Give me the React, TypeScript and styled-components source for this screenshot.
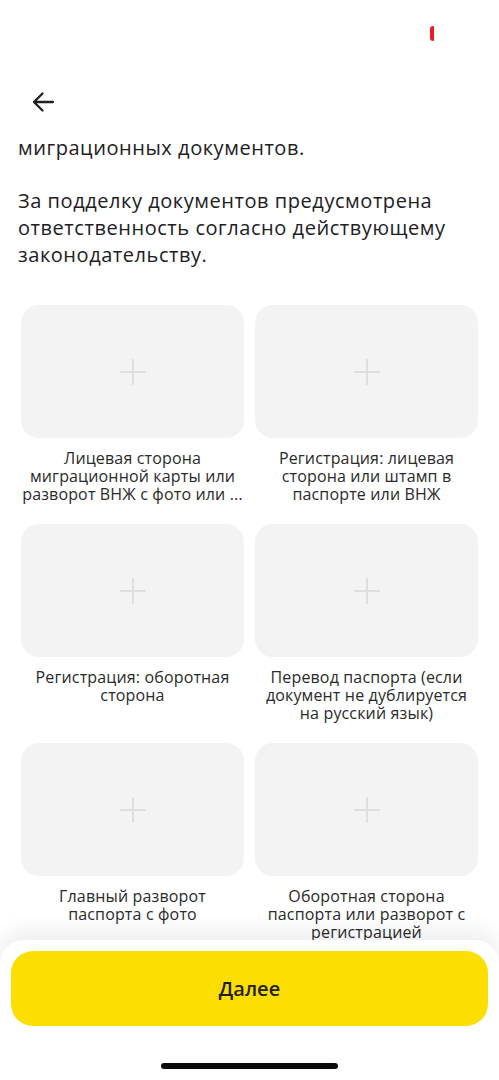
import React from "react";
import styled, { createGlobalStyle } from "styled-components";

const Global = createGlobalStyle`
  html, body { margin: 0; padding: 0; background: #ffffff; }
  body { font-family: "Open Sans", "Noto Sans", sans-serif; color: #21201f; }
  * { box-sizing: border-box; }
`;

const Screen = styled.div`
  position: relative;
  width: 499px;
  height: 1080px;
  overflow: hidden;
  display: flex;
  flex-direction: column;
  background: #ffffff;
`;

const Header = styled.header`
  flex-shrink: 0;
  background: #ffffff;
  position: relative;
  z-index: 2;
  display: flex;
  flex-direction: column;
`;

const StatusBar = styled.div`
  height: 70px;
  display: flex;
  justify-content: flex-end;
  align-items: flex-start;
  padding: 26px 65px 0 0;
`;

const RecDot = styled.span`
  width: 4px;
  height: 15px;
  border-radius: 3px 1px 1px 3px;
  background: #ec1c24;
`;

const NavBar = styled.div`
  height: 73px;
  display: flex;
  align-items: flex-start;
  padding: 20px 0 0 29px;
`;

const BackButton = styled.button`
  width: 28px;
  height: 24px;
  padding: 0;
  border: none;
  background: transparent;
  display: flex;
  align-items: center;
  justify-content: center;
  color: #21201f;
  cursor: pointer;
`;

const Scroller = styled.main`
  flex: 1;
  overflow: hidden;
  position: relative;
  z-index: 1;
`;

const ScrollContent = styled.div`
  margin-top: -35px;
  padding: 0 21px 200px;
`;

const Paragraph = styled.p`
  margin: 0 0 26.7px -3px;
  font-size: 20px;
  line-height: 26.7px;
  letter-spacing: 0.55px;
  color: #21201f;
`;

const Grid = styled.div`
  margin-top: 37px;
  display: grid;
  grid-template-columns: 1fr 1fr;
  column-gap: 11px;
  row-gap: 20px;
`;

const Slot = styled.div`
  display: flex;
  flex-direction: column;
  align-items: stretch;
`;

const Tile = styled.button`
  height: 133px;
  border: none;
  border-radius: 18px;
  background: #f3f3f3;
  display: flex;
  align-items: center;
  justify-content: center;
  padding: 0;
  cursor: pointer;
`;

const Label = styled.div`
  margin-top: 12px;
  min-height: 54px;
  font-size: 16px;
  line-height: 17.7px;
  letter-spacing: 0.15px;
  text-align: center;
  color: #2a2a2a;
`;

const Sheet = styled.div`
  position: absolute;
  left: 0;
  right: 0;
  bottom: 0;
  height: 140px;
  z-index: 3;
  background: #ffffff;
  border-radius: 24px 24px 0 0;
  box-shadow: 0 -10px 22px rgba(0, 0, 0, 0.07);
  display: flex;
  flex-direction: column;
  align-items: center;
  padding: 11px 11px 0;
`;

const PrimaryButton = styled.button`
  width: 100%;
  height: 75px;
  border: none;
  border-radius: 22px;
  background: #fcdf00;
  font-family: "Open Sans", "Noto Sans", sans-serif;
  font-size: 20px;
  font-weight: 600;
  color: #21201f;
  cursor: pointer;
`;

const HomeIndicator = styled.div`
  margin-top: 37px;
  width: 177px;
  height: 6px;
  border-radius: 3px;
  background: #0a0a0a;
`;

const PlusIcon = () => (
  <svg width="28" height="28" viewBox="0 0 28 28" fill="none">
    <path d="M14 2v24M2 14h24" stroke="#dedede" strokeWidth="2" strokeLinecap="round" />
  </svg>
);

const BackIcon = () => (
  <svg width="24" height="24" viewBox="0 0 24 24" fill="none">
    <path
      d="M22 12H3M11.5 3.5L3 12l8.5 8.5"
      stroke="currentColor"
      strokeWidth="2.3"
      strokeLinecap="round"
      strokeLinejoin="round"
    />
  </svg>
);

const slots = [
  "Лицевая сторона миграционной карты или разворот ВНЖ с фото или ...",
  "Регистрация: лицевая сторона или штамп в паспорте или ВНЖ",
  "Регистрация: оборотная сторона",
  "Перевод паспорта (если документ не дублируется на русский язык)",
  "Главный разворот паспорта с фото",
  "Оборотная сторона паспорта или разворот с регистрацией",
];

export default function App() {
  return (
    <>
      <Global />
      <Screen>
        <Header>
          <StatusBar>
            <RecDot />
          </StatusBar>
          <NavBar>
            <BackButton aria-label="Назад">
              <BackIcon />
            </BackButton>
          </NavBar>
        </Header>
        <Scroller>
          <ScrollContent>
            <Paragraph>
              Загрузите фотографии паспорта и
              <br />
              миграционных документов.
            </Paragraph>
            <Paragraph>
              За подделку документов предусмотрена ответственность согласно действующему
              законодательству.
            </Paragraph>
            <Grid>
              {slots.map((label) => (
                <Slot key={label}>
                  <Tile aria-label={label}>
                    <PlusIcon />
                  </Tile>
                  <Label>{label}</Label>
                </Slot>
              ))}
            </Grid>
          </ScrollContent>
        </Scroller>
        <Sheet>
          <PrimaryButton>Далее</PrimaryButton>
          <HomeIndicator />
        </Sheet>
      </Screen>
    </>
  );
}
